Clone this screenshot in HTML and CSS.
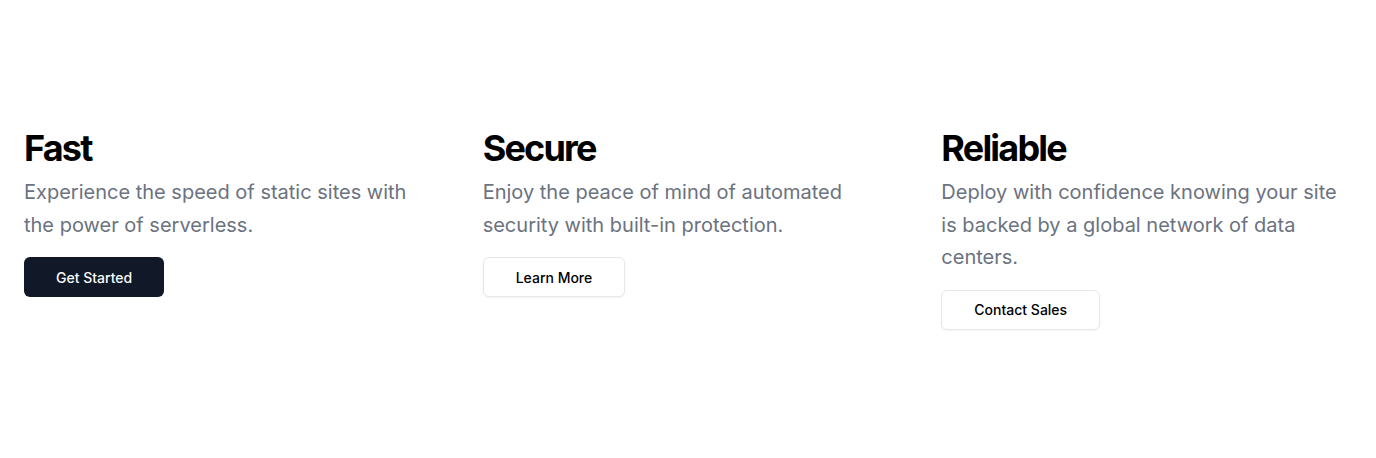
FILE: index.html
```html
<!DOCTYPE html>
<html lang="en">
<head>
<meta charset="utf-8">
<title>Features</title>
<link rel="stylesheet" href="styles.css">
</head>
<body>
<section class="section">
  <div class="grid">
    <div class="feature">
      <div class="text">
        <h2 class="title">Fast</h2>
        <p class="desc">Experience the speed of static sites with the power of serverless.</p>
      </div>
      <div><a class="btn btn-dark" href="#">Get Started</a></div>
    </div>
    <div class="feature">
      <div class="text">
        <h2 class="title">Secure</h2>
        <p class="desc">Enjoy the peace of mind of automated security with built-in protection.</p>
      </div>
      <div><a class="btn btn-outline" href="#">Learn More</a></div>
    </div>
    <div class="feature">
      <div class="text">
        <h2 class="title">Reliable</h2>
        <p class="desc">Deploy with confidence knowing your site is backed by a global network of data centers.</p>
      </div>
      <div><a class="btn btn-outline" href="#">Contact Sales</a></div>
    </div>
  </div>
</section>
</body>
</html>
```

FILE: styles.css
```css
* { box-sizing: border-box; }
html, body { margin: 0; padding: 0; background: #fff; }
body { font-family: Inter, "Noto Sans", sans-serif; color: #000; }

.section { width: 100%; padding: 128px 0; }
.grid {
  display: grid;
  grid-template-columns: repeat(3, 1fr);
  gap: 48px;
  padding: 0 24px;
  align-items: start;
}
.feature { display: flex; flex-direction: column; gap: 16px; }
.text { display: flex; flex-direction: column; gap: 8px; }
.title {
  margin: 0;
  font-size: 36px;
  line-height: 40px;
  font-weight: 700;
  letter-spacing: -0.05em;
  color: #000;
}
.desc {
  margin: 0;
  font-size: 20px;
  line-height: 32.5px;
  color: #6b7280;
}
.btn {
  display: inline-flex;
  align-items: center;
  justify-content: center;
  height: 40px;
  padding: 0 32px;
  border-radius: 6px;
  font-size: 14px;
  font-weight: 500;
  text-decoration: none;
}
.btn-dark { background: #111827; color: #f9fafb; }
.btn-outline {
  background: #fff;
  color: #000;
  border: 1px solid #e5e7eb;
  box-shadow: 0 1px 2px rgba(0,0,0,0.05);
}
```
